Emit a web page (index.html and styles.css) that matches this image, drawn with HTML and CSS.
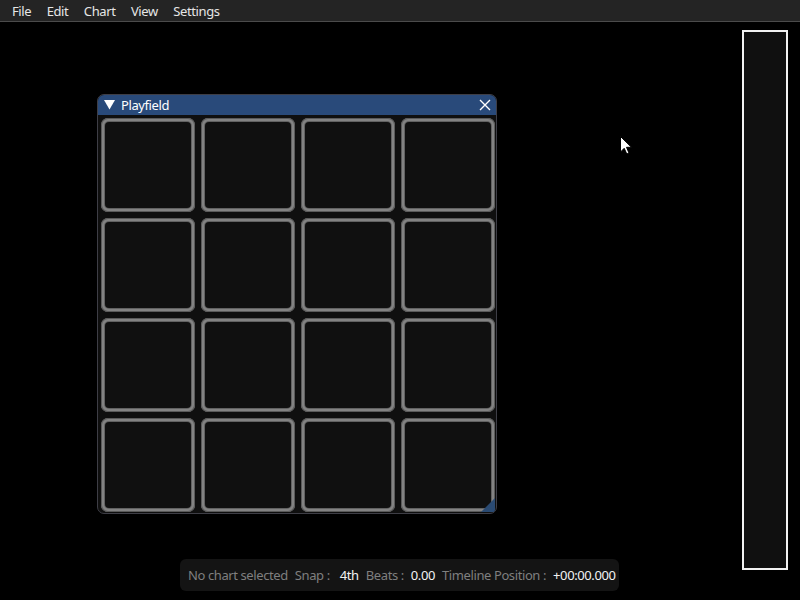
FILE: index.html
```html
<!DOCTYPE html>
<html>
<head>
<meta charset="utf-8">
<link rel="stylesheet" href="styles.css">
</head>
<body>
<div class="menubar">
  <span class="menu-item">File</span>
  <span class="menu-item">Edit</span>
  <span class="menu-item">Chart</span>
  <span class="menu-item">View</span>
  <span class="menu-item">Settings</span>
</div>
<div class="desktop">
  <div class="window playfield">
    <div class="titlebar">
      <svg class="collapse" width="11" height="10" viewBox="0 0 11 10"><polygon points="0,0 11,0 5.5,9.5" fill="#fff"/></svg>
      <span class="title">Playfield</span>
      <svg class="close" width="12" height="12" viewBox="0 0 12 12"><path d="M1 1 L11 11 M11 1 L1 11" stroke="#fff" stroke-width="1.4"/></svg>
    </div>
    <div class="grid">
      <div class="tile"><div class="tile-in"></div></div>
      <div class="tile"><div class="tile-in"></div></div>
      <div class="tile"><div class="tile-in"></div></div>
      <div class="tile"><div class="tile-in"></div></div>
      <div class="tile"><div class="tile-in"></div></div>
      <div class="tile"><div class="tile-in"></div></div>
      <div class="tile"><div class="tile-in"></div></div>
      <div class="tile"><div class="tile-in"></div></div>
      <div class="tile"><div class="tile-in"></div></div>
      <div class="tile"><div class="tile-in"></div></div>
      <div class="tile"><div class="tile-in"></div></div>
      <div class="tile"><div class="tile-in"></div></div>
      <div class="tile"><div class="tile-in"></div></div>
      <div class="tile"><div class="tile-in"></div></div>
      <div class="tile"><div class="tile-in"></div></div>
      <div class="tile"><div class="tile-in"></div></div>
    </div>
    <svg class="grip" width="14" height="14" viewBox="0 0 14 14"><polygon points="14,0 14,14 0,14" fill="#2a4a72"/></svg>
  </div>

  <div class="side-panel"></div>

  <div class="statusbar">
    <span class="label">No chart selected</span>
    <span class="label">Snap :</span>
    <span class="value snap">4th</span>
    <span class="label">Beats :</span>
    <span class="value">0.00</span>
    <span class="label">Timeline Position :</span>
    <span class="value">+00:00.000</span>
  </div>

  <svg class="cursor" width="13" height="20" viewBox="0 0 13 20"><path d="M0.5 0.5 L0.5 16 L4.2 12.3 L6.8 18 L9 17 L6.5 11.3 L11.5 11.3 Z" fill="#fff" stroke="#000" stroke-width="1"/></svg>
</div>
</body>
</html>
```
FILE: styles.css
```css
html, body {
  margin: 0;
  padding: 0;
  background: #000;
  width: 800px;
  height: 600px;
  overflow: hidden;
  font-family: "Noto Sans", "Open Sans", sans-serif;
  font-size: 13px;
  letter-spacing: -0.4px;
}

.menubar {
  height: 22px;
  box-sizing: border-box;
  background: #242424;
  border-bottom: 1px solid #4b4b4b;
  display: flex;
  align-items: center;
  gap: 15.5px;
  padding: 1px 0 0 12px;
  color: #e6e6e6;
}

.desktop {
  position: relative;
  height: 578px;
}

.window {
  position: absolute;
  box-sizing: border-box;
  background: #0f0f0f;
  border: 1px solid #3e3e46;
  border-radius: 7px;
  overflow: hidden;
}

.playfield {
  left: 97px;
  top: 72px;
  width: 400px;
  height: 420px;
}

.titlebar {
  height: 20px;
  background: #294a7a;
  display: flex;
  align-items: center;
  color: #fff;
  padding: 0 5px 0 6px;
}

.collapse {
  margin-right: 6px;
}

.title {
  flex: 1;
}

.grid {
  display: grid;
  grid-template-columns: repeat(4, 94px);
  grid-template-rows: repeat(4, 94px);
  gap: 6px;
  padding: 3px 0 0 3px;
}

.tile {
  box-sizing: border-box;
  background: #838383;
  border-radius: 7px;
  padding: 4px;
  box-shadow: inset 0 0 0 1px #5a5a5a;
}

.tile-in {
  width: 100%;
  height: 100%;
  background: #101010;
  border-radius: 4px;
  box-shadow: 0 0 0 1px #626262;
}

.grip {
  position: absolute;
  right: 1px;
  bottom: 1px;
}

.side-panel {
  position: absolute;
  left: 742px;
  top: 8px;
  width: 46px;
  height: 540px;
  box-sizing: border-box;
  border: 2px solid #f2f2f2;
  background: #101010;
}

.statusbar {
  position: absolute;
  left: 180px;
  top: 537px;
  width: 439px;
  height: 32px;
  box-sizing: border-box;
  background: #141414;
  border-radius: 6px;
  display: flex;
  align-items: center;
  padding-left: 8px;
  gap: 7px;
  white-space: nowrap;
}

.label {
  color: #7f7f7f;
}

.value {
  color: #f2f2f2;
}

.snap {
  margin-left: 3px;
}

.cursor {
  position: absolute;
  left: 620px;
  top: 114px;
}
```
